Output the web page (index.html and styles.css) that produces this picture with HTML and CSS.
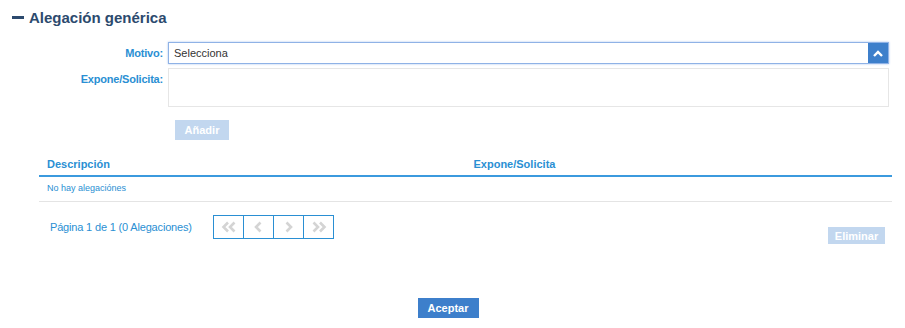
FILE: index.html
```html
<!DOCTYPE html>
<html lang="es">
<head>
  <meta charset="UTF-8">
  <title>Alegación genérica</title>
  <link rel="stylesheet" href="styles.css">
</head>
<body>
  <div class="panel">
    <h2 class="title"><span class="minus"></span>Alegación genérica</h2>

    <div class="form">
      <div class="row">
        <label class="lbl">Motivo:</label>
        <div class="select">
          <span>Selecciona</span>
          <span class="arrow">
            <svg width="10" height="7" viewBox="0 0 10 7"><path d="M1 6 L5 2 L9 6" fill="none" stroke="#fff" stroke-width="2.4"/></svg>
          </span>
        </div>
      </div>
      <div class="row">
        <label class="lbl">Expone/Solicita:</label>
        <div class="textarea"></div>
      </div>
      <div class="row">
        <span class="lbl"></span>
        <button class="btn btn-off add">Añadir</button>
      </div>
    </div>

    <table class="grid">
      <thead>
        <tr><th>Descripción</th><th>Expone/Solicita</th></tr>
      </thead>
      <tbody>
        <tr><td colspan="2">No hay alegaciónes</td></tr>
      </tbody>
    </table>

    <div class="footer">
      <span class="pageinfo">Página 1 de 1 (0 Alegaciones)</span>
      <div class="pager">
        <span><svg width="18" height="12" viewBox="0 0 18 12"><path d="M8 1.5 L3.5 6 L8 10.5 M14.5 1.5 L10 6 L14.5 10.5" fill="none" stroke="#d4d4d4" stroke-width="2.6"/></svg></span>
        <span><svg width="9" height="12" viewBox="0 0 9 12"><path d="M6.5 1.5 L2 6 L6.5 10.5" fill="none" stroke="#d4d4d4" stroke-width="2.6"/></svg></span>
        <span><svg width="9" height="12" viewBox="0 0 9 12"><path d="M2.5 1.5 L7 6 L2.5 10.5" fill="none" stroke="#d4d4d4" stroke-width="2.6"/></svg></span>
        <span><svg width="18" height="12" viewBox="0 0 18 12"><path d="M3.5 1.5 L8 6 L3.5 10.5 M10 1.5 L14.5 6 L10 10.5" fill="none" stroke="#d4d4d4" stroke-width="2.6"/></svg></span>
      </div>
      <button class="btn btn-off del">Eliminar</button>
    </div>

    <div class="actions">
      <button class="btn btn-on">Aceptar</button>
    </div>
  </div>
</body>
</html>
```

FILE: styles.css
```css
:root {
  --blue: #2a8fd3;
  --dark: #2c4a6e;
  --btn: #3d7fcb;
  --btn-off: #c2d7ef;
}

body {
  margin: 0;
  font-family: 'Liberation Sans', Arial, sans-serif;
  background: #fff;
  color: #333;
}

.panel {
  padding: 8px 13px 0 12px;
  width: 880px;
}

.title {
  margin: 0;
  font-size: 15px;
  font-weight: bold;
  color: var(--dark);
  display: flex;
  align-items: center;
  height: 19px;
}

.minus {
  display: inline-block;
  width: 12px;
  height: 3px;
  background: var(--dark);
  margin-right: 5px;
}

.form {
  margin-top: 15px;
  margin-right: 3px;
  display: flex;
  flex-direction: column;
  gap: 4px;
}

.row {
  display: flex;
  gap: 5px;
}

.lbl {
  width: 151px;
  text-align: right;
  font-size: 11px;
  font-weight: bold;
  color: var(--blue);
  padding-top: 5px;
  letter-spacing: -0.2px;
}

.select {
  flex: 1;
  height: 20px;
  border: 1px solid #8fb2e6;
  box-shadow: 0 0 2px #a9c4ee;
  display: flex;
  align-items: center;
  justify-content: space-between;
  font-size: 11px;
  color: #333;
  padding-left: 5px;
}

.arrow {
  width: 20px;
  height: 20px;
  background: var(--btn);
  display: flex;
  align-items: center;
  justify-content: center;
}

.textarea {
  flex: 1;
  height: 37px;
  border: 1px solid #e6e6e6;
}

.btn {
  border: none;
  color: #fff;
  font-family: inherit;
  font-size: 11px;
  font-weight: bold;
  padding: 0;
}

.btn-off {
  background: var(--btn-off);
}

.btn-on {
  background: var(--btn);
  width: 61px;
  height: 20px;
}

.add {
  width: 54px;
  height: 20px;
  margin-left: 7px;
  margin-top: 9px;
}

.grid {
  margin: 14px 0 0 27px;
  width: 853px;
  border-collapse: collapse;
  table-layout: fixed;
}

.grid th {
  text-align: left;
  font-size: 11px;
  font-weight: bold;
  color: var(--blue);
  padding: 4px 8px 5px;
  border-bottom: 2px solid #3b9ade;
}

.grid td {
  font-size: 9px;
  color: var(--blue);
  padding: 6px 8px 8px;
  border-bottom: 1px solid #e4e4e4;
}

.footer {
  display: flex;
  align-items: flex-start;
  margin: 13px 0 0 38px;
  width: 835px;
}

.pageinfo {
  font-size: 11px;
  letter-spacing: -0.17px;
  color: var(--blue);
  margin-top: 6px;
  width: 163px;
}

.pager {
  display: flex;
  border: 1px solid var(--blue);
  height: 22px;
}

.pager span {
  width: 29px;
  display: flex;
  align-items: center;
  justify-content: center;
  border-left: 1px solid var(--blue);
}

.pager span:first-child {
  border-left: none;
}

.del {
  margin-left: auto;
  margin-top: 12px;
  width: 57px;
  height: 17px;
}

.actions {
  display: flex;
  justify-content: center;
  margin-top: 54px;
  padding-right: 8px;
}
```
